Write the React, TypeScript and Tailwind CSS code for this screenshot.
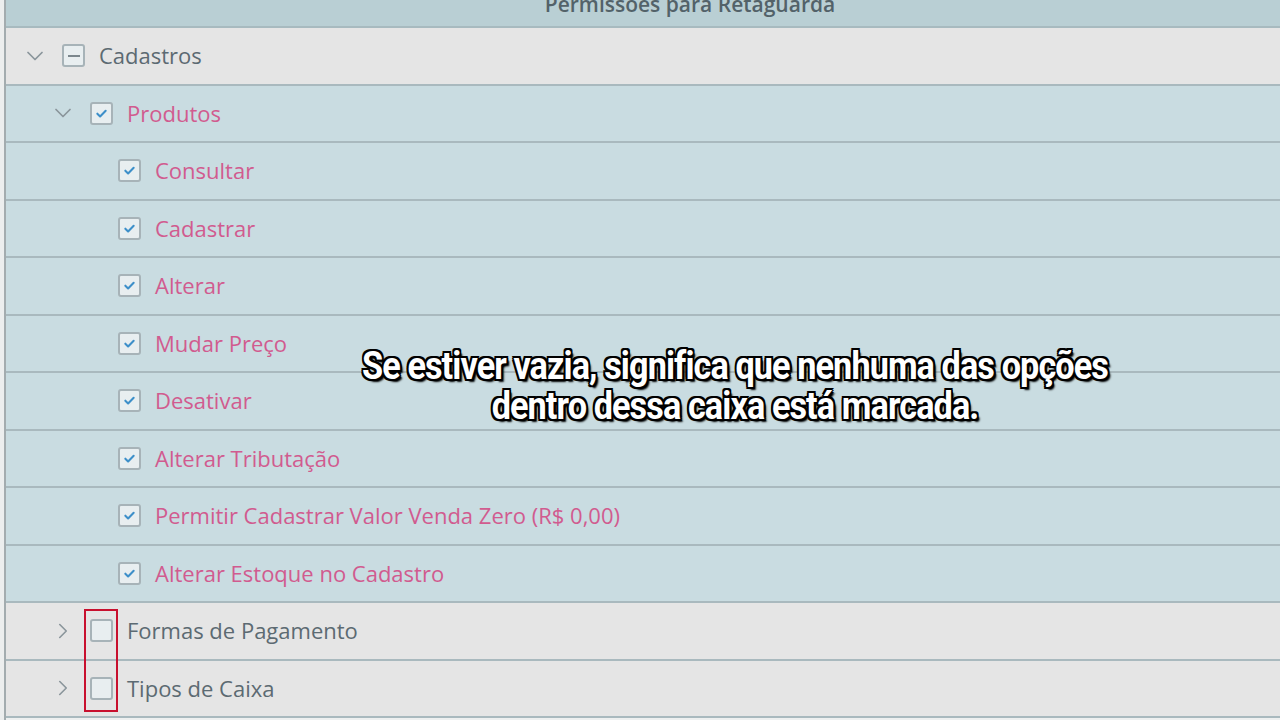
import { ChevronDown, ChevronRight } from "lucide-react";

const CHILDREN = [
  "Consultar",
  "Cadastrar",
  "Alterar",
  "Mudar Preço",
  "Desativar",
  "Alterar Tributação",
  "Permitir Cadastrar Valor Venda Zero (R$ 0,00)",
  "Alterar Estoque no Cadastro",
];

function Box({ state }: { state: "checked" | "partial" | "empty" }) {
  return (
    <span className="flex h-[23px] w-[23px] shrink-0 items-center justify-center rounded-[3px] border-2 border-[#a7b3b8] bg-[#e8eef0]">
      {state === "checked" && (
        <svg width="13" height="13" viewBox="0 0 14 14">
          <path d="M2.5 7.2l3 3 6-6.2" fill="none" stroke="#3d8fc9" strokeWidth="2.2" strokeLinecap="round" strokeLinejoin="round" />
        </svg>
      )}
      {state === "partial" && <span className="h-[2px] w-[12px] bg-[#7b878d]" />}
    </span>
  );
}

function Row({
  indent,
  chevron,
  box,
  label,
  tone,
}: {
  indent: string;
  chevron?: "down" | "right";
  box: "checked" | "partial" | "empty";
  label: string;
  tone: "gray" | "blue";
}) {
  const bg = tone === "gray" ? "bg-[#e5e5e5]" : "bg-[#c9dce1]";
  const text = tone === "gray" ? "text-[#5c6a72]" : "text-[#d15b8f]";
  return (
    <div className={`flex h-[57.5px] items-center border-b-2 border-[#a9b9be] ${bg} ${indent}`}>
      <span className="flex w-[28px] shrink-0 items-center justify-center text-[#8a959b]">
        {chevron === "down" && <ChevronDown size={28} strokeWidth={1.5} />}
        {chevron === "right" && <ChevronRight size={26} strokeWidth={1.5} />}
      </span>
      <span className="ml-[13px]">
        <Box state={box} />
      </span>
      <span className={`ml-[14px] text-[22px] ${text}`}>{label}</span>
    </div>
  );
}

export default function App() {
  return (
    <div
      className="relative flex h-[720px] w-[1280px] overflow-hidden bg-[#eef0f0]"
      style={{ fontFamily: '"Open Sans", "Noto Sans", sans-serif' }}
    >
      <div className="w-[6px] shrink-0 border-r-2 border-[#a3acaf] bg-[#eceeee]" />
      <div className="flex flex-1 flex-col">
        <div className="flex h-[28px] shrink-0 items-start justify-center overflow-hidden border-b-2 border-[#a7babf] bg-[#b9cfd4]">
          <span className="-mt-[11px] pl-[94px] text-[21px] font-semibold text-[#536269]">
            Permissões para Retaguarda
          </span>
        </div>
        <Row indent="pl-[15px]" chevron="down" box="partial" label="Cadastros" tone="gray" />
        <Row indent="pl-[43px]" chevron="down" box="checked" label="Produtos" tone="blue" />
        {CHILDREN.map((c) => (
          <Row key={c} indent="pl-[71px]" box="checked" label={c} tone="blue" />
        ))}
        <div className="relative">
          <Row indent="pl-[43px]" chevron="right" box="empty" label="Formas de Pagamento" tone="gray" />
          <Row indent="pl-[43px]" chevron="right" box="empty" label="Tipos de Caixa" tone="gray" />
          <div className="absolute left-[78px] top-[6px] h-[103px] w-[34px] border-2 border-[#c8102e]" />
        </div>
      </div>

      <div
        className="absolute left-[190px] right-0 top-[346px] scale-x-90 text-center text-[38px] font-bold leading-[40px] tracking-[-1px] text-white"
        style={{
          fontFamily: '"Roboto", "Liberation Sans", sans-serif',
          textShadow:
            "2px 0 0 #000, -2px 0 0 #000, 0 2px 0 #000, 0 -2px 0 #000, 2px 2px 0 #000, -2px -2px 0 #000, 2px -2px 0 #000, -2px 2px 0 #000, 3px 3px 2px #000",
        }}
      >
        Se estiver vazia, significa que nenhuma das opções
        <br />
        dentro dessa caixa está marcada.
      </div>
    </div>
  );
}
